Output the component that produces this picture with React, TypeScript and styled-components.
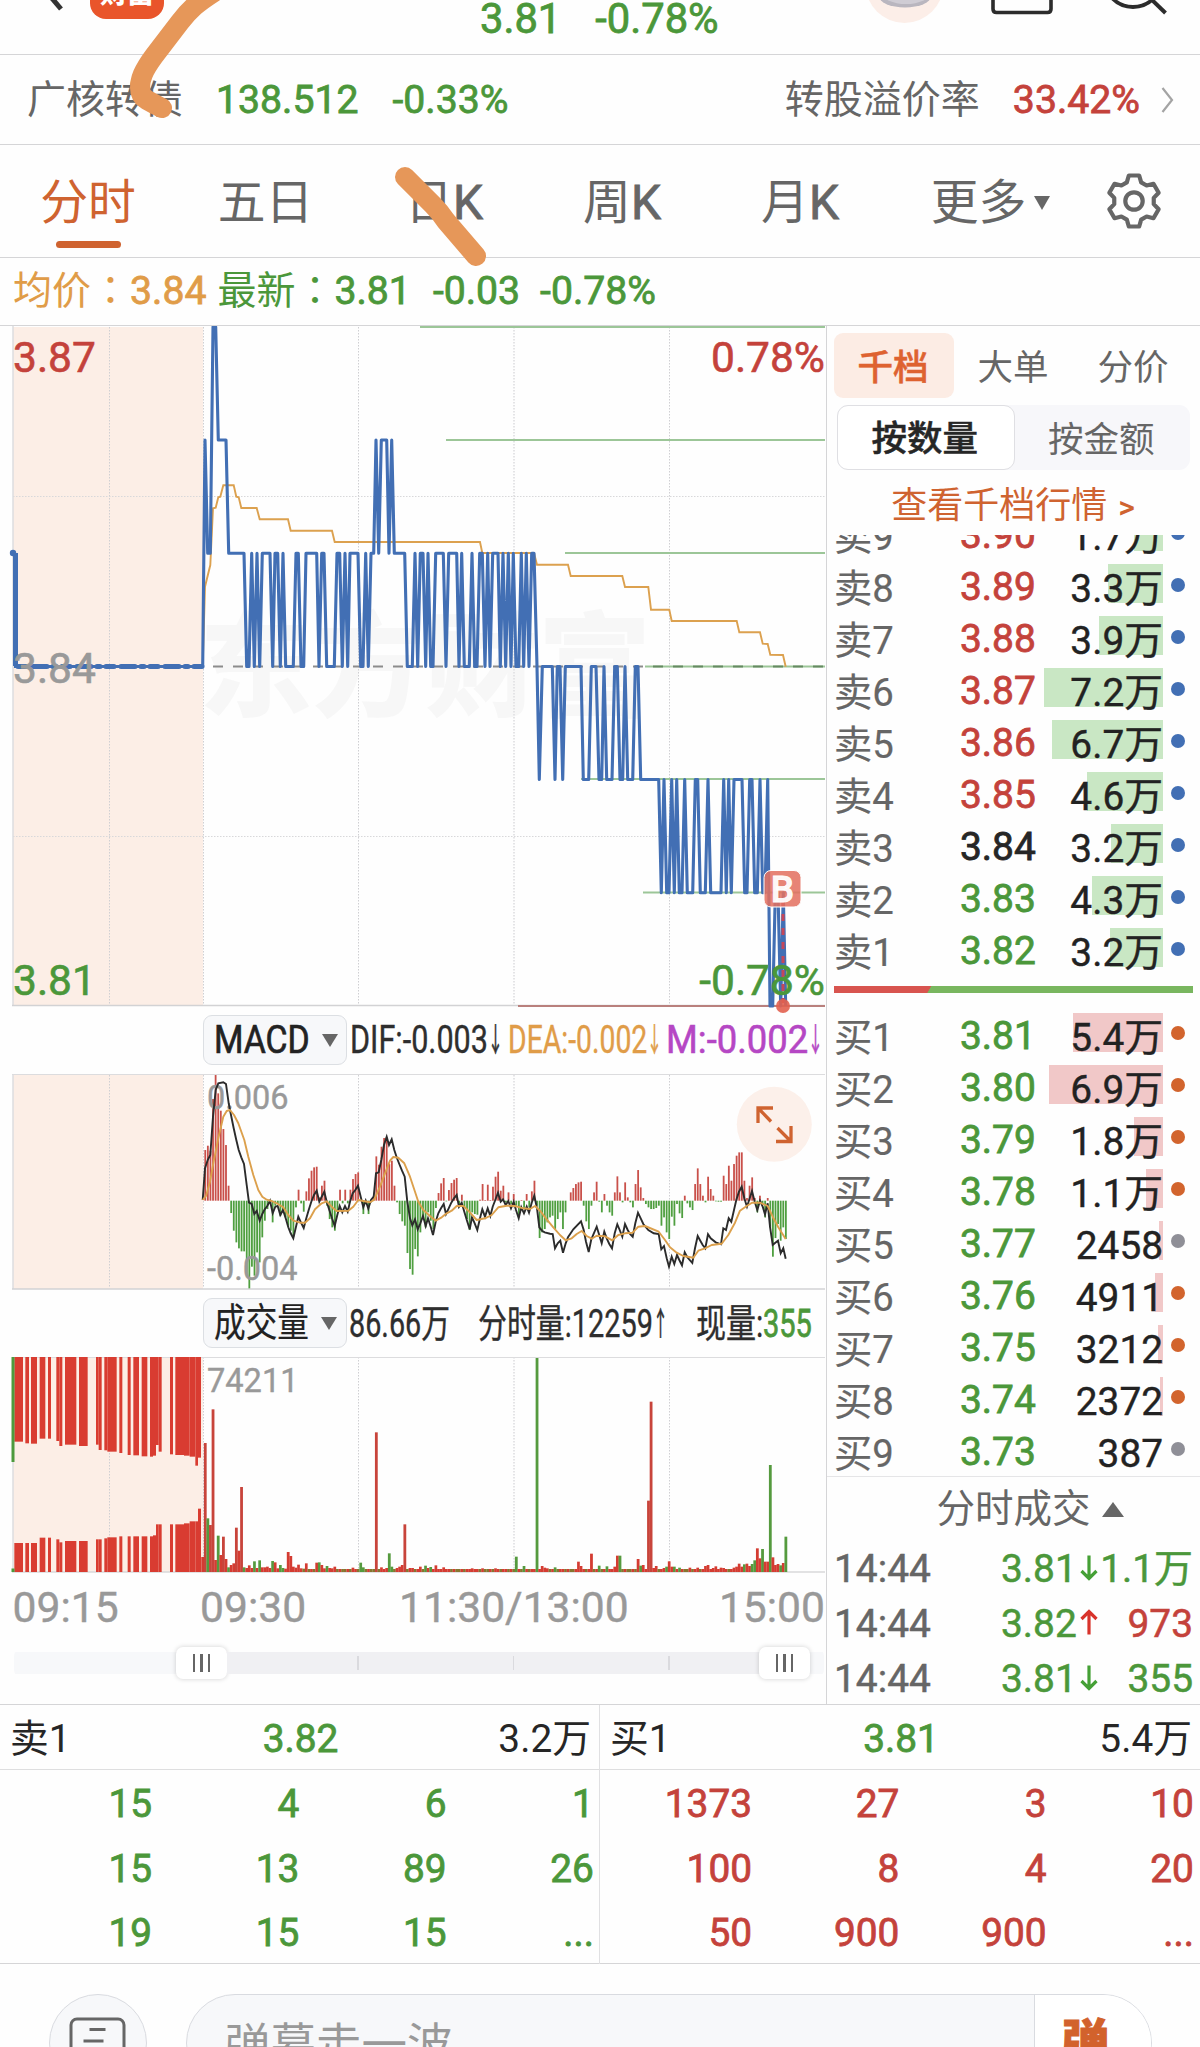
import React, { useLayoutEffect, useRef } from "react";
import styled, { createGlobalStyle, css } from "styled-components";

const C = {
  green: "#4b973a",
  red: "#c4423b",
  orange: "#cf6330",
  amber: "#e09c48",
  gray: "#666666",
  light: "#999999",
  ink: "#262626",
  line: "#d5d5d7",
  blush: "#fceee6",
  blue: "#426fb4",
  mark: "#e69759",
};
const FONT = `Roboto, "Noto Sans CJK SC", sans-serif`;

const Global = createGlobalStyle`
  * { box-sizing: border-box; }
  html, body { margin: 0; background: #fefefe; }
  body { overflow: hidden; font-family: ${FONT}; }
`;

const Page = styled.div`
  position: relative;
  width: 1200px;
  height: 2047px;
  overflow: hidden;
  background: #fefefe;
  color: ${C.ink};
  font-size: 39px;
  font-weight: 400;
  white-space: pre;
`;

/* figures are drawn a little heavier than the labels round them */
const figure = css`
  -webkit-text-stroke: 0.8px currentColor;
`;

/* ---------- text that is condensed or widened to a given width ---------- */

const FitBox = styled.span<{ $w: number; $color?: string; $size?: number; $heavy?: number; $dy?: number }>`
  display: block;
  flex: none;
  width: ${(p) => p.$w}px;
  padding-top: ${(p) => p.$dy ?? 0}px;
  color: ${(p) => p.$color ?? "inherit"};
  font-size: ${(p) => p.$size ?? 39}px;
  -webkit-text-stroke: ${(p) => p.$heavy ?? 0.4}px currentColor;
`;
const FitInner = styled.span`
  display: inline-block;
  transform-origin: 0 50%;
  white-space: pre;
`;
type FitProps = { w: number; color?: string; size?: number; heavy?: number; dy?: number; children: React.ReactNode };
function Fit({ w, color, size, heavy, dy, children }: FitProps) {
  const ref = useRef<HTMLSpanElement>(null);
  useLayoutEffect(() => {
    const el = ref.current;
    if (el) el.style.transform = `scaleX(${w / el.offsetWidth})`;
  }, [w]);
  return (
    <FitBox $w={w} $color={color} $size={size} $heavy={heavy} $dy={dy}>
      <FitInner ref={ref}>{children}</FitInner>
    </FitBox>
  );
}

/* ---------- header ---------- */

const Header = styled.header`
  position: relative;
  height: 55px;
  border-bottom: 1px solid ${C.line};
  display: flex;
  justify-content: space-between;
  overflow: hidden;
`;
const HeaderIcons = styled.svg<{ $w: number }>`
  display: block;
  width: ${(p) => p.$w}px;
  height: 54px;
`;
const BackArea = styled.div`
  width: 360px;
  height: 54px;
  display: flex;
`;
const Logo = styled.div`
  width: 74px;
  height: 60px;
  margin: -41px 0 0 26px;
  border-radius: 16px;
  background: #e9552b;
  color: #fff;
  font-size: 27px;
  font-weight: 900;
  line-height: 40px;
  text-align: center;
  padding-top: 15px;
`;
const HeaderQuote = styled.div`
  width: 480px;
  display: flex;
  gap: 34px;
  padding-left: 120px;
  color: ${C.green};
  font-size: 41.7px;
  line-height: 38px;
  ${figure}
`;

const BondRow = styled.div`
  height: 90px;
  padding: 0 26px 0 27px;
  display: flex;
  align-items: center;
  border-bottom: 1px solid ${C.line};
  color: ${C.gray};
  line-height: 82px;
`;
const BondValue = styled.span<{ $color: string; $gap: number }>`
  color: ${(p) => p.$color};
  margin-left: ${(p) => p.$gap}px;
  font-size: 39.2px;
  ${figure}
`;
const Spacer = styled.span`
  flex: 1;
`;
const Chevron = styled.svg`
  width: 13px;
  height: 26px;
  margin: 9px 0 9px 21px;
`;

const Tabs = styled.nav`
  height: 113px;
  display: flex;
  align-items: stretch;
  border-bottom: 1px solid ${C.line};
`;
const Tab = styled.div<{ $active?: boolean; $w: number }>`
  width: ${(p) => p.$w}px;
  display: flex;
  flex-direction: column;
  align-items: center;
  color: ${(p) => (p.$active ? C.orange : C.gray)};
  font-size: 47.8px;
  line-height: 60px;
  padding-top: 28px;
`;
const TabLetter = styled.span`
  -webkit-text-stroke: 0.9px currentColor;
`;
const Underline = styled.i`
  width: 65px;
  height: 7px;
  margin-top: 8px;
  border-radius: 4px;
  background: ${C.orange};
`;
const MoreLabel = styled.span`
  display: flex;
  align-items: center;
  gap: 8px;
`;
const Caret = styled.i<{ $up?: boolean; $w: number; $h: number }>`
  width: 0;
  height: 0;
  border-left: ${(p) => p.$w / 2}px solid transparent;
  border-right: ${(p) => p.$w / 2}px solid transparent;
  ${(p) => (p.$up ? "border-bottom" : "border-top")}: ${(p) => p.$h}px solid ${C.gray};
`;
const Gear = styled.svg`
  width: 60px;
  height: 60px;
  margin: 26px 0 0 12px;
`;

const QuoteRow = styled.div`
  height: 68px;
  padding-left: 13px;
  display: flex;
  border-bottom: 1px solid ${C.line};
  color: ${C.green};
  line-height: 67px;
`;
const QuoteLabel = styled.span<{ $color?: string; $gap?: number }>`
  color: ${(p) => p.$color ?? C.green};
  margin-left: ${(p) => p.$gap ?? 0}px;
`;
const Colon = styled.span`
  font-family: "Noto Sans CJK TC", sans-serif;
  line-height: 0;
`;
const QuoteFigure = styled(QuoteLabel)`
  font-size: 39.2px;
  ${figure}
`;

/* ---------- charts ---------- */

const Main = styled.main`
  height: 1378px;
  display: flex;
`;
const ChartColumn = styled.section`
  width: 827px;
  border-right: 1px solid ${C.line};
`;
const Plot = styled.svg`
  display: block;
  width: 826px;
  font-family: ${FONT};
  font-weight: 400;
`;
const Legend = styled.div<{ $h: number; $top: number }>`
  height: ${(p) => p.$h}px;
  padding: ${(p) => p.$top}px 0 0 203px;
  display: flex;
  align-items: flex-start;
  line-height: 50px;
  color: #2e2e2e;
`;
const IndicatorButton = styled.div`
  width: 144px;
  height: 50px;
  display: flex;
  align-items: center;
  gap: 12px;
  padding-left: 10px;
  border: 1px solid #dcdfe3;
  border-radius: 9px;
  background: #f7f8fa;
  color: #222;
  line-height: 48px;
`;
const Gap = styled.span<{ $w: number }>`
  flex: none;
  width: ${(p) => p.$w}px;
`;

const Axis = styled.div`
  height: 72px;
  display: grid;
  grid-template-columns: 187.5px 199px 1fr auto;
  padding: 0 1px 0 12.5px;
  color: ${C.light};
  font-size: 42.6px;
  line-height: 66px;
  -webkit-text-stroke: 0.4px currentColor;
`;
const Slider = styled.div`
  height: 34px;
  width: 810px;
  margin-left: 14px;
  display: flex;
  align-items: center;
  background: linear-gradient(#f7f8fa, #f7f8fa) 0 6px / 100% 22px no-repeat;
  border-radius: 11px;
`;
const SliderPad = styled.i`
  width: 162px;
`;
const SliderRange = styled.i`
  flex: 1;
  height: 22px;
  background: #f0f0f3;
  display: flex;
  align-items: center;
  padding-left: 130px;
  gap: 154px;
`;
const Tick = styled.i`
  width: 1.5px;
  height: 14px;
  background: #dadade;
`;
const Handle = styled.i<{ $end?: boolean }>`
  width: 51px;
  height: 32px;
  margin-right: ${(p) => (p.$end ? 14 : 0)}px;
  border-radius: 7px;
  background: #fff;
  box-shadow: 0 0 5px rgba(0, 0, 0, 0.18);
  display: flex;
  align-items: center;
  justify-content: center;
  gap: 5px;
`;
const Grip = styled.i`
  width: 2.5px;
  height: 18px;
  background: #666;
`;

/* minute step of the session in thirds of a pixel */
const STEP = 7.776;
const minuteX = (i: number) => (608 + i * STEP) / 3;

const LEVEL: Record<string, number> = { a: 327, b: 440, c: 553.3, d: 666.5, e: 779.5, f: 892.7, g: 1006 };
const priceRuns =
  "608d 615b 623c 631c 639a 647a 655b 678b 686c 732c 740d 747d 755c 763d 771c 779d 787c 810c 818d 825c 833c 841d 849c 857d 880d 888c 895c 903d 911d 918c 950c 957d 965c 972c 980d 1003d 1011c 1019c 1027d 1035c 1043d 1050c 1074c 1082d 1089d 1097c 1105d 1113c 1121c 1128b 1136c 1144b 1160b 1167c 1175b 1183c 1214c 1222d 1237d 1245c 1253d 1261c 1269c 1277d 1284c 1292d 1299d 1307c 1330c 1338d 1346c 1370c 1377d 1385c 1393d 1408d 1416c 1424d 1431d 1439c 1447c 1455d 1463c 1470d 1478c 1494c 1501d 1509c 1517d 1525c 1533d 1540c 1548d 1556d 1564c 1571d 1579c 1587d 1595c 1602c 1611d 1618e 1627d 1657d 1665e 1672d 1680d 1688e 1696d 1743d 1750e 1766e 1774d 1788d 1797e 1805e 1812d 1820e 1836e 1844d 1852d 1860e 1868e 1875d 1883e 1898e 1906d 1914d 1922e 1976e 1984f 1992e 2000f 2007f 2015e 2023f 2030e 2038f 2046f 2054e 2062f 2078f 2086e 2093e 2101f 2116f 2124e 2132f 2163f 2171e 2179f 2186e 2194f 2202e 2226e 2234f 2241f 2249e 2256e 2264f 2272f 2280e 2288f 2295f 2303e 2310g 2318g 2326f 2334f 2342g 2350f 2357g";
const pricePoints = priceRuns
  .split(" ")
  .map((t) => `${(parseInt(t, 10) / 3).toFixed(1)},${LEVEL[t.slice(-1)]}`)
  .join(" ");

const toPoints = (nums: number[], y0: number) => {
  const out: string[] = [];
  for (let i = 0; i < nums.length; i += 2) out.push(`${(nums[i] / 3).toFixed(1)},${(y0 + nums[i + 1] / 3).toFixed(1)}`);
  return out.join(" ");
};

const averagePoints = toPoints(
  [608, 1040, 615, 800, 631, 735, 639, 565, 647, 563, 655, 532, 661, 530, 670, 496, 701, 496, 709, 530, 716, 532, 724, 564, 770, 564,
    779, 598, 864, 598, 872, 632, 996, 632, 1004, 666, 1440, 666, 1447, 699, 1602, 699, 1611, 734, 1704, 734, 1712, 768, 1867, 768,
    1875, 801, 1945, 801, 1953, 869, 2008, 869, 2015, 903, 2210, 903, 2218, 937, 2280, 937, 2288, 971, 2303, 972, 2311, 1004, 2349,
    1005, 2357, 1040],
  320
);

const histogram = [
  0, 152, 165, 150, 305, 377, 322, 270, 215, 167, 45, -37, -90, -125, -143, -152, -152, -225, -263, -198, -225, -155, -185, -110, -60,
  -25, -5, -65, -15, -10, -45, -30, -50, -75, -90, -108, -20, 33, -8, -33, 28, 67, 90, 100, 102, 10, 45, 60, -15, -55, -80, -90, -30,
  33, -8, 33, -8, 33, 65, 80, 85, 0, -40, -10, -40, -5, 15, 133, 108, 162, 188, 190, 110, 120, 45, -5, -40, -62, -75, -157, -205, -222,
  -145, -167, -95, -55, -80, -35, -60, -85, -22, 23, 52, 68, -2, 32, 53, 63, 68, -10, 18, -20, -55, -88, -35, -40, -42, 3, 50, 2, 48, 2,
  42, 72, 87, 30, 45, -5, 25, -10, 20, -15, -50, 2, -25, 20, -20, 28, 60, -15, -112, -95, -85, -65, -50, -45, -85, -55, -35, -85, -35,
  0, 25, 38, 50, 55, 57, -15, -62, -85, -15, 25, 57, -3, -35, 20, -15, -35, -45, 25, 73, 25, -5, 55, 10, -5, -20, 50, 92, 40, 8, -10,
  -20, -25, -25, -22, -15, -75, -50, -95, -115, -48, -75, -10, -38, -52, 15, -8, -20, -28, 50, 97, 50, 15, -5, 72, 35, 15, -2, -3, -3,
  75, 50, 105, 60, 110, 135, 145, 145, 60, 8, 45, 70, 8, -35, 15, -10, -50, 8, -80, -168, -112, -70, -120, -80, -115,
];

const difPoints = toPoints(
  [608, 600, 615, 505, 623, 480, 631, 465, 639, 350, 647, 270, 655, 250, 670, 247, 678, 252, 686, 310, 693, 345, 701, 385, 709, 420, 716,
    450, 724, 472, 732, 492, 740, 555, 747, 608, 755, 612, 763, 642, 770, 633, 779, 662, 787, 642, 794, 628, 802, 618, 810, 602, 818, 640,
    826, 620, 833, 618, 841, 645, 849, 630, 857, 655, 865, 682, 872, 700, 880, 715, 888, 680, 895, 650, 903, 668, 911, 684, 919, 655, 926,
    630, 934, 605, 942, 585, 950, 572, 958, 605, 965, 590, 973, 575, 980, 605, 988, 630, 996, 655, 1004, 678, 1012, 645, 1019, 618, 1027,
    637, 1035, 618, 1043, 635, 1050, 605, 1058, 580, 1066, 570, 1074, 557, 1082, 590, 1090, 622, 1097, 602, 1105, 626, 1113, 600, 1121,
    590, 1128, 520, 1136, 517, 1144, 480, 1152, 435, 1160, 410, 1167, 435, 1175, 418, 1183, 450, 1191, 475, 1199, 495, 1206, 512, 1214,
    530, 1222, 605, 1230, 655, 1237, 676, 1245, 658, 1253, 688, 1261, 670, 1269, 648, 1277, 678, 1284, 655, 1292, 680, 1299, 705, 1307,
    665, 1315, 640, 1323, 625, 1331, 612, 1338, 642, 1346, 625, 1354, 608, 1362, 595, 1370, 585, 1377, 620, 1385, 608, 1393, 635, 1401,
    662, 1409, 688, 1416, 652, 1424, 670, 1432, 690, 1440, 655, 1447, 628, 1455, 650, 1463, 625, 1471, 648, 1478, 620, 1486, 600, 1494,
    578, 1502, 605, 1509, 598, 1517, 615, 1525, 603, 1533, 625, 1541, 605, 1548, 630, 1556, 655, 1564, 622, 1572, 640, 1580, 620, 1587,
    638, 1595, 608, 1603, 587, 1611, 625, 1618, 682, 1626, 692, 1634, 697, 1650, 701, 1658, 702, 1665, 745, 1673, 730, 1681, 722, 1689,
    758, 1697, 730, 1704, 712, 1720, 688, 1743, 664, 1751, 690, 1758, 725, 1766, 756, 1774, 718, 1790, 680, 1797, 703, 1805, 730, 1813,
    695, 1820, 715, 1828, 732, 1836, 745, 1844, 700, 1852, 673, 1859, 690, 1867, 710, 1875, 672, 1883, 690, 1890, 702, 1898, 710, 1906,
    670, 1914, 638, 1922, 655, 1930, 672, 1945, 690, 1961, 700, 1976, 702, 1984, 748, 1992, 738, 2000, 775, 2007, 800, 2015, 770, 2023,
    792, 2031, 765, 2038, 780, 2046, 796, 2054, 757, 2062, 772, 2077, 789, 2085, 745, 2093, 708, 2101, 722, 2108, 735, 2116, 745, 2124,
    703, 2132, 715, 2147, 727, 2163, 733, 2170, 685, 2178, 690, 2186, 655, 2194, 665, 2202, 630, 2209, 600, 2217, 575, 2225, 560, 2233,
    595, 2241, 620, 2249, 595, 2256, 573, 2264, 605, 2272, 630, 2280, 602, 2288, 620, 2295, 643, 2303, 610, 2310, 680, 2318, 735, 2326,
    728, 2334, 722, 2342, 760, 2350, 745, 2357, 776],
  1000
);
const deaPoints = toPoints(
  [608, 600, 618, 588, 630, 545, 640, 490, 655, 415, 670, 350, 680, 333, 690, 330, 702, 345, 715, 370, 733, 420, 745, 470, 760, 525, 775,
    570, 787, 590, 800, 599, 815, 603, 830, 610, 850, 622, 865, 645, 880, 662, 900, 668, 915, 668, 930, 655, 945, 628, 965, 610, 980, 604,
    995, 620, 1010, 633, 1045, 632, 1060, 620, 1075, 600, 1090, 603, 1110, 607, 1122, 600, 1140, 560, 1155, 520, 1170, 482, 1180, 471,
    1195, 473, 1213, 490, 1230, 530, 1245, 575, 1255, 605, 1270, 630, 1290, 648, 1307, 662, 1325, 652, 1340, 640, 1355, 632, 1370, 618,
    1390, 618, 1405, 632, 1430, 660, 1455, 655, 1475, 645, 1495, 622, 1520, 617, 1545, 618, 1570, 625, 1590, 627, 1605, 618, 1620, 632,
    1640, 658, 1660, 682, 1680, 705, 1697, 721, 1715, 715, 1730, 702, 1745, 693, 1760, 708, 1775, 716, 1790, 707, 1815, 709, 1837, 721,
    1855, 705, 1875, 700, 1898, 698, 1915, 680, 1935, 678, 1976, 695, 1995, 720, 2010, 742, 2030, 758, 2050, 768, 2080, 773, 2095, 752,
    2115, 745, 2135, 735, 2165, 731, 2185, 705, 2205, 668, 2220, 632, 2240, 618, 2256, 608, 2280, 608, 2303, 618, 2318, 650, 2335, 682,
    2357, 717],
  1000
);

/* call-auction bars: x0, x1, end of the upper part, start of the lower part */
const auction = [
  [43, 69, 305, 609], [76, 87, 310, 609], [93, 111, 311, 609], [119, 136, 296, 593], [144, 153, 296, 593], [169, 178, 303, 598],
  [178, 187, 318, 607], [195, 229, 314, 603], [237, 263, 318, 603], [288, 296, 314, 598], [296, 305, 330, 598], [313, 322, 331, 595],
  [322, 350, 335, 592], [358, 367, 339, 589], [383, 392, 345, 589], [400, 417, 346, 589], [425, 442, 349, 589], [450, 459, 350, 589],
  [459, 468, 347, 586], [468, 476, 315, 553], [476, 485, 335, 553], [510, 519, 343, 553], [526, 552, 345, 553], [552, 569, 347, 550],
  [569, 586, 350, 544], [586, 594, 377, 544], [594, 603, 353, 506],
];

/* traded volume by minute: position, top, g for a falling minute */
const volumeSpec =
  "608:651 615:309 623:535g 631:555 639:208 647:660 655:587g 662:645 670:590 678:657 686:682g 693:675 701:670 709:563 716:632 724:441 732:682g 740:684 748:676 755:684 763:664g 770:684 779:661g 787:682 795:682 802:680 810:684 818:663g 826:667 833:685 841:675g 849:684g 857:686 865:636 872:648 880:680 888:683 895:674 903:685 911:686g 919:670 950:668 958:667g 965:675 973:685 980:678g 988:684 996:685 1004:680 1058:683 1082:668g 1090:682g 1128:277 1144:682 1160:684 1167:640g 1175:680g 1191:684 1199:680 1206:675 1214:553 1230:684 1238:684 1261:680 1277:677g 1284:684 1292:681g 1307:676 1331:682 1417:685 1447:685 1486:685 1548:650g 1572:678g 1611:54g 1626:678 1634:683 1642:685 1665:682g 1735:665 1743:678 1774:641 1797:677g 1820:679g 1844:680 1852:647 1860:647g 1914:657 1922:677g 1930:675 1945:482 1953:185 1961:684 1969:678 1992:684 2000:680g 2007:664 2015:680 2023:680g 2038:683g 2070:683 2093:683 2116:678 2124:675 2140:684 2147:679 2163:683 2170:684 2202:683 2210:680 2217:671 2225:680 2233:673g 2241:671 2249:678 2256:672g 2264:661g 2272:625 2280:655 2288:627g 2295:665 2303:665 2310:375g 2318:652 2326:675 2334:672 2342:676g 2350:669 2357:590g";
const volumes: { top: number; down: boolean }[] = Array.from({ length: 226 }, (_, i) => ({ top: 687, down: (i * 7) % 11 < 5 }));
volumeSpec.split(" ").forEach((t) => {
  const [x, y] = t.split(":");
  const i = Math.round((Number(x) - 608) / STEP);
  volumes[i] = { top: parseInt(y, 10), down: y.endsWith("g") };
});

function Verticals({ y1, y2 }: { y1: number; y2: number }) {
  return (
    <g stroke="#cfcfd2" strokeWidth="1" strokeDasharray="1.5 1.5">
      {[109.5, 203.5, 358.5, 669.5].map((x) => (
        <line key={x} x1={x} x2={x} y1={y1} y2={y2} />
      ))}
      <line x1="514" x2="514" y1={y1} y2={y2} strokeWidth="2" stroke="#e4e4e6" />
    </g>
  );
}

function PricePlot() {
  return (
    <Plot height="688" viewBox="0 326 826 688">
      <rect x="13" y="327" width="190" height="679" fill={C.blush} />
      <text x="199" y="707" fontSize="113" fontWeight="900" fill="#f7f7f7">东方财富</text>
      <Verticals y1={327} y2={1005} />
      <g stroke="#d8d8da" strokeDasharray="1.5 1.5">
        <line x1="13" x2="825" y1="496.5" y2="496.5" />
        <line x1="13" x2="825" y1="836.5" y2="836.5" />
      </g>
      <line x1="13" x2="13" y1="326" y2="1006" stroke="#dddddf" strokeWidth="1.5" />
      <line x1="12" x2="825" y1="1005.5" y2="1005.5" stroke="#d2d2d4" strokeWidth="1.5" />
      <g stroke="#9cc698" strokeWidth="2">
        <line x1="420" x2="825" y1="327" y2="327" />
        <line x1="446" x2="825" y1="440" y2="440" />
        <line x1="565" x2="825" y1="553" y2="553" />
        <line x1="645" x2="825" y1="666.5" y2="666.5" />
        <line x1="581" x2="825" y1="779" y2="779" />
        <line x1="643" x2="825" y1="892.5" y2="892.5" />
      </g>
      <line x1="518" x2="825" y1="1006" y2="1006" stroke="#b9807d" strokeWidth="2" />
      <line x1="213" x2="645" y1="666.5" y2="666.5" stroke="#8c8c8c" strokeWidth="2" strokeDasharray="10 10" />
      <line x1="653" x2="825" y1="666.5" y2="666.5" stroke="#668a62" strokeWidth="2" strokeDasharray="10 10" />
      <polyline points={averagePoints} fill="none" stroke="#dca14f" strokeWidth="1.9" />
      <line x1="15.5" x2="15.5" y1="553" y2="666" stroke={C.blue} strokeWidth="5" />
      <line x1="14" x2="203" y1="666.5" y2="666.5" stroke={C.blue} strokeWidth="3.2" />
      <line x1="18" x2="202" y1="666.5" y2="666.5" stroke={C.blue} strokeWidth="5" strokeLinecap="round" strokeDasharray="8 7 14 6 3 6" />
      <circle cx="13" cy="553" r="3.2" fill={C.blue} />
      <polyline points={pricePoints} fill="none" stroke={C.blue} strokeWidth="3.1" strokeLinejoin="round" />
      <line x1="783" x2="783" y1="900" y2="1003" stroke="#c4475a" strokeWidth="3" strokeDasharray="7 7" />
      <g fontSize="42.5">
        <text x="13" y="372" fill={C.red} stroke={C.red} strokeWidth="0.6">3.87</text>
        <text x="825" y="372" fill={C.red} stroke={C.red} strokeWidth="0.6" textAnchor="end">0.78%</text>
        <text x="13" y="683" fill={C.light} stroke={C.light} strokeWidth="0.6">3.84</text>
        <text x="13" y="995" fill={C.green} stroke={C.green} strokeWidth="0.6">3.81</text>
        <text x="825" y="995" fill={C.green} stroke={C.green} strokeWidth="0.6" textAnchor="end">-0.78%</text>
      </g>
      <rect x="764" y="870.5" width="37" height="36.5" rx="7" fill="#e3705f" fillOpacity="0.86" stroke="#fff" strokeWidth="1" />
      <text x="782.5" y="902" fontSize="37" fontWeight="500" fill="#fff" fillOpacity="0.95" stroke="#fff" strokeWidth="0.8" textAnchor="middle">B</text>
      <circle cx="783" cy="1006" r="7" fill="#e2604f" fillOpacity="0.9" />
    </Plot>
  );
}

function MacdPlot() {
  return (
    <Plot height="216" viewBox="0 1074 826 216">
      <rect x="13" y="1075" width="190" height="214" fill={C.blush} />
      <Verticals y1={1075} y2={1288} />
      <line x1="13" x2="13" y1="1074" y2="1289" stroke="#dddddf" strokeWidth="1.5" />
      <line x1="12" x2="825" y1="1074.5" y2="1074.5" stroke="#dcdcde" />
      <line x1="12" x2="825" y1="1289" y2="1289" stroke="#d2d2d4" strokeWidth="1.6" />
      {histogram.map((v, i) => (
        <rect
          key={i}
          x={minuteX(i) - 0.9}
          width="1.8"
          y={v > 0 ? 1200.7 - v / 3 : 1200.7}
          height={Math.abs(v) / 3}
          fill={v > 0 ? "#c9504a" : "#4f9f40"}
        />
      ))}
      <g fontSize="32.5" fill={C.light} stroke={C.light} strokeWidth="0.4">
        <text x="207" y="1109">0.006</text>
        <text x="207" y="1279.5">-0.004</text>
      </g>
      <polyline points={difPoints} fill="none" stroke="#2b2b2b" strokeWidth="1.9" />
      <polyline points={deaPoints} fill="none" stroke="#dca04c" strokeWidth="1.9" strokeLinejoin="round" />
      <circle cx="774.3" cy="1124.3" r="37.5" fill="#fcf0ea" />
      <g stroke={C.orange} strokeWidth="3.3" fill="none">
        <path d="M773 1108H758V1123M758 1108L771 1121.5" />
        <path d="M776 1141.5H791V1126M791 1141.5L777.5 1128" />
      </g>
    </Plot>
  );
}

function VolumePlot() {
  return (
    <Plot height="218" viewBox="0 1356 826 218">
      <rect x="13" y="1357" width="190" height="215" fill={C.blush} />
      <Verticals y1={1357} y2={1571} />
      <line x1="13" x2="13" y1="1357" y2="1572" stroke="#dddddf" strokeWidth="1.5" />
      <line x1="12" x2="825" y1="1357.5" y2="1357.5" stroke="#dcdcde" />
      <line x1="12" x2="825" y1="1572" y2="1572" stroke="#d8d8da" strokeWidth="1.6" />
      <g fill="#d93c31">
        {auction.map(([x0, x1, a, b]) => (
          <React.Fragment key={x0}>
            <rect x={x0 / 3} width={(x1 - x0) / 3} y="1357" height={(a - 51) / 3} />
            <rect x={x0 / 3} width={(x1 - x0) / 3} y={1340 + b / 3} height={(696 - b) / 3} />
          </React.Fragment>
        ))}
      </g>
      <rect x="11.5" y="1357" width="3" height="105" fill="#4d9a3d" />
      <rect x="11.5" y="1568.5" width="3" height="3.5" fill="#4d9a3d" />
      {volumes.map((v, i) => (
        <rect
          key={i}
          x={minuteX(i) - 1.4}
          width={v.top < 660 ? 2.8 : 2.7}
          y={1340 + v.top / 3}
          height={(696 - v.top) / 3}
          fill={v.down ? (v.top > 684 ? "#86762f" : "#559a3e") : v.top < 600 ? "#c8443b" : "#d43c32"}
        />
      ))}
      <text x="207" y="1392" fontSize="32.6" fill={C.light} stroke={C.light} strokeWidth="0.4">74211</text>
    </Plot>
  );
}

/* ---------- order book ---------- */

const BookColumn = styled.aside`
  width: 373px;
  padding-top: 7px;
`;
const BookTabs = styled.div`
  display: flex;
  padding-left: 7px;
  height: 65px;
`;
const BookTab = styled.div<{ $active?: boolean }>`
  width: 120px;
  border-radius: 9px;
  background: ${(p) => (p.$active ? "#fcece4" : "transparent")};
  color: ${(p) => (p.$active ? "#de6230" : C.gray)};
  font-size: 35.5px;
  font-weight: ${(p) => (p.$active ? 500 : 400)};
  ${(p) => p.$active && "-webkit-text-stroke: 0.5px currentColor;"}
  line-height: 71px;
  text-align: center;
  text-indent: -2px;
`;
const Segments = styled.div`
  margin: 7px 10px 0;
  height: 65px;
  display: flex;
  border-radius: 11px;
  background: #f7f7fa;
`;
const Segment = styled.div<{ $active?: boolean }>`
  flex: 1;
  font-size: 35.5px;
  line-height: ${(p) => (p.$active ? 67 : 70)}px;
  text-align: center;
  text-indent: -2px;
  border-radius: 11px;
  ${(p) =>
    p.$active
      ? "background:#fff;border:1.5px solid #dfdfe3;font-weight:500;-webkit-text-stroke:0.5px currentColor;color:#262626;"
      : "color:#666;"}
`;
const BookLink = styled.div`
  height: 65px;
  font-size: 36px;
  line-height: 73px;
  text-align: center;
  text-indent: -1px;
  color: ${C.orange};
`;
const LinkArrow = styled.b`
  font-size: 32px;
  font-weight: 500;
  margin-left: 11px;
`;
const SellList = styled.div`
  height: 438.5px;
  overflow: hidden;
  display: flex;
  flex-direction: column;
  justify-content: flex-end;
`;
const BuyList = styled.div`
  height: 484.5px;
  padding-top: 13px;
  border-bottom: 1px solid #e5e5e7;
`;
const LevelRow = styled.div`
  flex: none;
  height: 52.03px;
  display: grid;
  grid-template-columns: 126px 84px 119px 1fr;
  padding-left: 7px;
  align-items: center;
  font-size: 38.3px;
`;
const LevelName = styled.span`
  color: ${C.gray};
  padding-top: 9px;
  line-height: 45px;
  -webkit-text-stroke: 0.2px currentColor;
`;
const LevelPrice = styled.span<{ $color: string }>`
  color: ${(p) => p.$color};
  padding-top: 5px;
  font-size: 38.9px;
  line-height: 49px;
  ${figure}
`;
const LevelVolume = styled.span<{ $bar: number; $color: string }>`
  text-align: right;
  padding-top: 9px;
  font-size: 38.8px;
  line-height: 45px;
  color: #222;
  -webkit-text-stroke: 0.4px currentColor;
  background: linear-gradient(${(p) => p.$color}, ${(p) => p.$color}) right 0 top 7px / ${(p) => p.$bar}px 39px no-repeat;
`;
const Dot = styled.i<{ $color: string }>`
  width: 14px;
  height: 14px;
  margin: 1px 0 0 8px;
  border-radius: 50%;
  background: ${(p) => p.$color};
`;
const Ratio = styled.div`
  height: 7px;
  margin: 12px 7px 0;
  background: linear-gradient(120deg, #d8544f 0 84px, #79b65f 84.5px);
`;
const TradesTitle = styled.div`
  display: flex;
  align-items: center;
  justify-content: center;
  gap: 11px;
  height: 65px;
  padding: 0 0 1px 33px;
  color: ${C.gray};
  font-size: 38.5px;
  line-height: 58px;
`;
const TradeRow = styled.div`
  height: 54.9px;
  display: grid;
  grid-template-columns: 167px 79px 18px 95px;
  padding-left: 7px;
  align-items: center;
  color: ${C.gray};
  font-size: 38.9px;
  line-height: 54px;
`;
const TradeCell = styled.span<{ $color: string; $right?: boolean }>`
  color: ${(p) => p.$color};
  text-align: ${(p) => (p.$right ? "right" : "left")};
  margin-left: ${(p) => (p.$right ? "-20px" : "0")};
  -webkit-text-stroke: 0.5px currentColor;
`;
const ArrowIcon = styled.svg`
  width: 18px;
  height: 28px;
  margin-bottom: 2px;
`;

const sells: [string, string, string, number, string][] = [
  ["卖9", "3.90", "1.7万", 29, C.red],
  ["卖8", "3.89", "3.3万", 55, C.red],
  ["卖7", "3.88", "3.9万", 64, C.red],
  ["卖6", "3.87", "7.2万", 119, C.red],
  ["卖5", "3.86", "6.7万", 111, C.red],
  ["卖4", "3.85", "4.6万", 76, C.red],
  ["卖3", "3.84", "3.2万", 52, C.ink],
  ["卖2", "3.83", "4.3万", 71, C.green],
  ["卖1", "3.82", "3.2万", 53, C.green],
];
const buys: [string, string, string, number, string][] = [
  ["买1", "3.81", "5.4万", 90, "#d2642d"],
  ["买2", "3.80", "6.9万", 114, "#d2642d"],
  ["买3", "3.79", "1.8万", 29, "#d2642d"],
  ["买4", "3.78", "1.1万", 17, "#d2642d"],
  ["买5", "3.77", "2458", 4, "#8f8f97"],
  ["买6", "3.76", "4911", 8, "#d2642d"],
  ["买7", "3.75", "3212", 5, "#d2642d"],
  ["买8", "3.74", "2372", 3, "#d2642d"],
  ["买9", "3.73", "387", 0, "#8f8f97"],
];
const trades: [string, string, boolean, string, string][] = [
  ["14:44", "3.81", false, "1.1万", C.green],
  ["14:44", "3.82", true, "973", C.red],
  ["14:44", "3.81", false, "355", C.green],
];

/* ---------- queue table ---------- */

const Queues = styled.section`
  display: grid;
  grid-template-columns: 600px 600px;
  height: 260px;
  border-top: 1px solid ${C.line};
  border-bottom: 1px solid ${C.line};
`;
const Queue = styled.div<{ $divided?: boolean }>`
  border-right: ${(p) => (p.$divided ? `1px solid #e0e0e2` : "0")};
  font-size: 38.8px;
`;
const QueueHead = styled.div`
  height: 65px;
  border-bottom: 1px solid #dededf;
  display: flex;
  justify-content: space-between;
  padding: 0 8px 0 10px;
  line-height: 68px;
`;
const QueuePrice = styled.span`
  color: ${C.green};
  margin-left: 32px;
  ${figure}
`;
const QueueGrid = styled.div<{ $color: string }>`
  display: grid;
  grid-template-columns: 152px 147.3px 147.3px 147.3px;
  grid-auto-rows: 64.5px;
  line-height: 68px;
  text-align: right;
  color: ${(p) => p.$color};
  ${figure}
`;

/* ---------- footer ---------- */

const Footer = styled.footer`
  height: 140px;
  padding: 30px 0 0 49px;
  display: flex;
  gap: 39px;
`;
const NoteButton = styled.div`
  width: 98px;
  height: 98px;
  border-radius: 50%;
  border: 1.5px solid #d9dbe0;
  background: #f7f8fa;
`;
const NoteIcon = styled.svg`
  display: block;
  width: 95px;
  height: 95px;
`;
const Composer = styled.div`
  width: 966px;
  height: 98px;
  display: flex;
  border: 1.5px solid #d9dbe0;
  border-radius: 49px;
  overflow: hidden;
  background: #f7f8fa;
`;
const Placeholder = styled.div`
  width: 847px;
  padding-left: 38px;
  color: ${C.light};
  font-size: 45.5px;
  line-height: 101px;
`;
const BarrageToggle = styled.div`
  flex: 1;
  padding-left: 27px;
  border-left: 1.5px solid #d9dbe0;
  background: #fff;
  color: #d2622c;
  font-size: 47px;
  font-weight: 900;
  line-height: 93px;
  -webkit-text-stroke: 1px currentColor;
`;

const PenMarks = styled.svg`
  position: absolute;
  left: 0;
  top: 0;
  width: 500px;
  height: 280px;
  pointer-events: none;
`;

const gearPath = (() => {
  const pts: string[] = [];
  for (let k = 0; k < 6; k++) {
    const base = -90 + 60 * k;
    ([[-21, 20], [-11.5, 26], [11.5, 26], [21, 20]] as const).forEach(([da, r]) => {
      const a = ((base + da) * Math.PI) / 180;
      pts.push(`${(30 + r * Math.cos(a)).toFixed(2)} ${(30 + r * Math.sin(a)).toFixed(2)}`);
    });
  }
  return `M${pts.join("L")}Z`;
})();

export default function App() {
  return (
    <Page>
      <Global />
      <Header>
        <BackArea>
          <HeaderIcons $w={64} viewBox="0 0 64 54">
            <path d="M45 -10L61 9" stroke="#333" strokeWidth="5" fill="none" />
          </HeaderIcons>
          <Logo>财富</Logo>
        </BackArea>
        <HeaderQuote>
          <span>3.81</span>
          <span>-0.78%</span>
        </HeaderQuote>
        <HeaderIcons $w={360} viewBox="840 0 360 54">
          <circle cx="904.5" cy="-16" r="39" fill="#fceee8" />
          <ellipse cx="905" cy="-4" rx="26" ry="11.5" fill="#b9b6bf" />
          <ellipse cx="906" cy="-7" rx="24" ry="11" fill="#cfccd4" />
          <path d="M993 -10V9Q993 12.5 996.5 12.5H1047.5Q1051 12.5 1051 9V-10" fill="none" stroke="#2c2c2c" strokeWidth="3.6" />
          <circle cx="1133" cy="-22" r="29" fill="none" stroke="#2c2c2c" strokeWidth="3.8" />
          <path d="M1150 -2L1165.5 13" stroke="#2c2c2c" strokeWidth="4" />
        </HeaderIcons>
      </Header>

      <BondRow>
        <span>广核转债</span>
        <BondValue $color={C.green} $gap={33}>138.512</BondValue>
        <BondValue $color={C.green} $gap={34}>-0.33%</BondValue>
        <Spacer />
        <span>转股溢价率</span>
        <BondValue $color={C.red} $gap={33}>33.42%</BondValue>
        <Chevron viewBox="0 0 13 26">
          <path d="M1.5 1L11 13L1.5 25" fill="none" stroke="#a4a4a4" strokeWidth="2.2" />
        </Chevron>
      </BondRow>

      <Tabs>
        <Tab $active $w={176}>
          分时
          <Underline />
        </Tab>
        <Tab $w={179}>五日</Tab>
        <Tab $w={178}>
          <span>日<TabLetter>K</TabLetter></span>
        </Tab>
        <Tab $w={178}>
          <span>周<TabLetter>K</TabLetter></span>
        </Tab>
        <Tab $w={178}>
          <span>月<TabLetter>K</TabLetter></span>
        </Tab>
        <Tab $w={203}>
          <MoreLabel>
            更多
            <Caret $w={17} $h={14} />
          </MoreLabel>
        </Tab>
        <Gear viewBox="0 0 60 60">
          <path d={gearPath} fill="none" stroke="#666" strokeWidth="4.2" strokeLinejoin="round" />
          <circle cx="30" cy="30" r="8.7" fill="none" stroke="#666" strokeWidth="4.2" />
        </Gear>
      </Tabs>

      <QuoteRow>
        <QuoteLabel $color={C.amber}>均价<Colon>：</Colon></QuoteLabel>
        <QuoteFigure $color={C.amber}>3.84</QuoteFigure>
        <QuoteLabel $gap={11}>最新<Colon>：</Colon></QuoteLabel>
        <QuoteFigure>3.81</QuoteFigure>
        <QuoteFigure $gap={22}>-0.03</QuoteFigure>
        <QuoteFigure $gap={20}>-0.78%</QuoteFigure>
      </QuoteRow>

      <Main>
        <ChartColumn>
          <PricePlot />
          <Legend $h={60} $top={1}>
            <IndicatorButton>
              <Fit w={96} heavy={0.7}>MACD</Fit>
              <Caret $w={16} $h={13} />
            </IndicatorButton>
            <Gap $w={3} />
            <Fit w={138}>DIF:-0.003</Fit>
            <Fit w={15} size={32} heavy={0.8}>↓</Fit>
            <Gap $w={5} />
            <Fit w={139} color={C.amber}>DEA:-0.002</Fit>
            <Fit w={15} size={32} heavy={0.8} color={C.amber}>↓</Fit>
            <Gap $w={4} />
            <Fit w={142} color="#b547c4" heavy={0.6}>M:-0.002</Fit>
            <Fit w={15} size={32} heavy={0.8} color="#b547c4">↓</Fit>
          </Legend>
          <MacdPlot />
          <Legend $h={66} $top={8}>
            <IndicatorButton>
              <Fit w={95} heavy={0.2}>成交量</Fit>
              <Caret $w={16} $h={13} />
            </IndicatorButton>
            <Gap $w={2} />
            <Fit w={101} dy={1}>86.66万</Fit>
            <Gap $w={28} />
            <Fit w={175} dy={1}>分时量:12259</Fit>
            <Fit w={15} size={32} dy={1} heavy={0.8}>↑</Fit>
            <Gap $w={28} />
            <Fit w={67} dy={1}>现量:</Fit>
            <Fit w={49} dy={1} color={C.green} heavy={0.8}>355</Fit>
          </Legend>
          <VolumePlot />
          <Axis>
            <span>09:15</span>
            <span>09:30</span>
            <span>11:30/13:00</span>
            <span>15:00</span>
          </Axis>
          <Slider>
            <SliderPad />
            <Handle>
              <Grip />
              <Grip />
              <Grip />
            </Handle>
            <SliderRange>
              <Tick />
              <Tick />
              <Tick />
            </SliderRange>
            <Handle $end>
              <Grip />
              <Grip />
              <Grip />
            </Handle>
          </Slider>
        </ChartColumn>

        <BookColumn>
          <BookTabs>
            <BookTab $active>千档</BookTab>
            <BookTab>大单</BookTab>
            <BookTab>分价</BookTab>
          </BookTabs>
          <Segments>
            <Segment $active>按数量</Segment>
            <Segment>按金额</Segment>
          </Segments>
          <BookLink>
            查看千档行情<LinkArrow>&gt;</LinkArrow>
          </BookLink>
          <SellList>
            {sells.map(([name, price, volume, bar, color]) => (
              <LevelRow key={name}>
                <LevelName>{name}</LevelName>
                <LevelPrice $color={color}>{price}</LevelPrice>
                <LevelVolume $bar={bar} $color="#c9e7c4">{volume}</LevelVolume>
                <Dot $color={C.blue} />
              </LevelRow>
            ))}
          </SellList>
          <Ratio />
          <BuyList>
            {buys.map(([name, price, volume, bar, dot]) => (
              <LevelRow key={name}>
                <LevelName>{name}</LevelName>
                <LevelPrice $color={C.green}>{price}</LevelPrice>
                <LevelVolume $bar={bar} $color="#f1c8c8">{volume}</LevelVolume>
                <Dot $color={dot} />
              </LevelRow>
            ))}
          </BuyList>
          <TradesTitle>
            分时成交
            <Caret $up $w={23} $h={15} />
          </TradesTitle>
          {trades.map(([time, price, up, volume, color], i) => (
            <TradeRow key={i}>
              <TradeCell $color={C.gray}>{time}</TradeCell>
              <TradeCell $color={C.green}>{price}</TradeCell>
              <ArrowIcon viewBox="0 0 18 28">
                <path
                  d={up ? "M9 25.5V3M1.5 10L9 2.5L16.5 10" : "M9 1.5V24M1.5 17L9 24.5L16.5 17"}
                  fill="none"
                  stroke={up ? "#d8332b" : "#44a035"}
                  strokeWidth="3.2"
                />
              </ArrowIcon>
              <TradeCell $color={color} $right>{volume}</TradeCell>
            </TradeRow>
          ))}
        </BookColumn>
      </Main>

      <Queues>
        <Queue $divided>
          <QueueHead>
            <span>卖1</span>
            <QueuePrice>3.82</QueuePrice>
            <span>3.2万</span>
          </QueueHead>
          <QueueGrid $color={C.green}>
            {["15", "4", "6", "1", "15", "13", "89", "26", "19", "15", "15", "..."].map((v, i) => (
              <span key={i}>{v}</span>
            ))}
          </QueueGrid>
        </Queue>
        <Queue>
          <QueueHead>
            <span>买1</span>
            <QueuePrice>3.81</QueuePrice>
            <span>5.4万</span>
          </QueueHead>
          <QueueGrid $color={C.red}>
            {["1373", "27", "3", "10", "100", "8", "4", "20", "50", "900", "900", "..."].map((v, i) => (
              <span key={i}>{v}</span>
            ))}
          </QueueGrid>
        </Queue>
      </Queues>

      <Footer>
        <NoteButton>
          <NoteIcon viewBox="50.5 1995.5 95 95">
            <rect x="71.5" y="2019.5" width="53" height="48" rx="6" fill="none" stroke="#666" strokeWidth="3" />
            <path d="M90 2030H106M84 2041.5H104" stroke="#666" strokeWidth="3" />
          </NoteIcon>
        </NoteButton>
        <Composer>
          <Placeholder>弹幕走一波</Placeholder>
          <BarrageToggle>弹</BarrageToggle>
        </Composer>
      </Footer>

      <PenMarks viewBox="0 0 500 280">
        <g fill="none" stroke={C.mark} strokeWidth="20" strokeLinecap="round" strokeLinejoin="round">
          <path d="M214 -8C197 3 190 9 180 22L154 56C143 71 140 79 140 88Q140 96 147 100Q156 105 162 108" />
          <path d="M405 177L433 205Q440 212 446 221L476 256" />
        </g>
      </PenMarks>
    </Page>
  );
}
